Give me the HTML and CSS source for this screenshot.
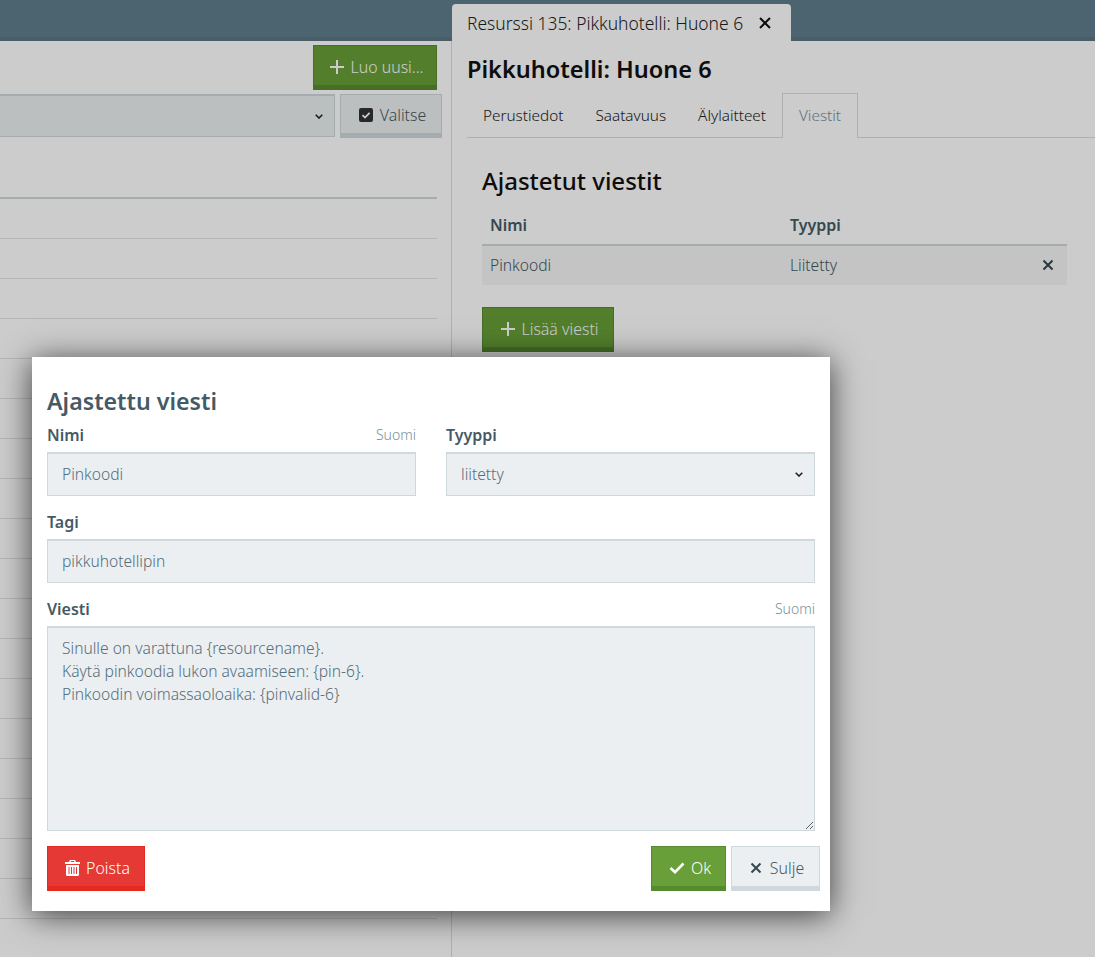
FILE: index.html
```html
<!DOCTYPE html>
<html lang="fi">
<head>
    <meta charset="UTF-8">
    <title>Resurssi 135</title>
    <link rel="stylesheet" href="styles.css">
</head>
<body>
<div class="topBar">
    <div class="pageTab">
        <span>Resurssi 135: Pikkuhotelli: Huone 6</span>
        <svg class="tabClose" viewBox="0 0 14 14"><path d="M2 2 12 12M12 2 2 12"/></svg>
    </div>
</div>
<div class="main">
    <div class="listPanel">
        <div class="listTools">
            <button class="btn btnGreen newBtn" type="button">
                <svg class="plus" viewBox="0 0 14 14"><path d="M7 0V14M0 7H14"/></svg>Luo uusi...
            </button>
        </div>
        <div class="filterRow">
            <select class="filterSelect"><option></option></select>
            <button class="btn btnGrey selectBtn" type="button">
                <svg class="checkBox" viewBox="0 0 14 14"><rect width="14" height="14" rx="2"/><path d="M3.5 7.2 6 9.6 10.6 4.8"/></svg>Valitse
            </button>
        </div>
        <div class="listRows">
            <div class="listHead"></div>
            <div class="listRow"></div>
            <div class="listRow"></div>
            <div class="listRow"></div>
            <div class="listRow"></div>
            <div class="listRow"></div>
            <div class="listRow"></div>
            <div class="listRow"></div>
            <div class="listRow"></div>
            <div class="listRow"></div>
            <div class="listRow"></div>
            <div class="listRow"></div>
            <div class="listRow"></div>
            <div class="listRow"></div>
            <div class="listRow"></div>
            <div class="listRow"></div>
            <div class="listRow"></div>
            <div class="listRow"></div>
            <div class="listRow"></div>
        </div>
    </div>
    <div class="detailPanel">
        <h2 class="detailTitle">Pikkuhotelli: Huone 6</h2>
        <ul class="tabGroup">
            <li class="tab">Perustiedot</li>
            <li class="tab">Saatavuus</li>
            <li class="tab">Älylaitteet</li>
            <li class="tab selectedTab">Viestit</li>
        </ul>
        <div class="tabContent">
            <h3 class="sectionTitle">Ajastetut viestit</h3>
            <div class="msgTable">
                <div class="msgHead">
                    <span class="colName">Nimi</span>
                    <span>Tyyppi</span>
                </div>
                <div class="msgRow">
                    <span class="colName">Pinkoodi</span>
                    <span class="colType">Liitetty</span>
                    <svg class="rowClose" viewBox="0 0 12 12"><path d="M1.5 1.5 10.5 10.5M10.5 1.5 1.5 10.5"/></svg>
                </div>
            </div>
            <button class="btn btnGreen addBtn" type="button">
                <svg class="plus" viewBox="0 0 14 14"><path d="M7 0V14M0 7H14"/></svg>Lisää viesti
            </button>
        </div>
    </div>
</div>
<div class="overlay"></div>
<div class="modal">
    <h2 class="modalTitle">Ajastettu viesti</h2>
    <div class="fieldPair">
        <div class="field">
            <div class="labelRow"><label>Nimi</label><span class="lang">Suomi</span></div>
            <input class="control" type="text" value="Pinkoodi">
        </div>
        <div class="field">
            <div class="labelRow"><label>Tyyppi</label></div>
            <select class="control"><option>liitetty</option></select>
        </div>
    </div>
    <div class="field spaced">
        <div class="labelRow"><label>Tagi</label></div>
        <input class="control" type="text" value="pikkuhotellipin">
    </div>
    <div class="field spaced">
        <div class="labelRow"><label>Viesti</label><span class="lang">Suomi</span></div>
        <textarea class="control message">Sinulle on varattuna {resourcename}.
Käytä pinkoodia lukon avaamiseen: {pin-6}.
Pinkoodin voimassaoloaika: {pinvalid-6}</textarea>
    </div>
    <div class="modalButtons">
        <button class="btn btnRed" type="button">
            <svg class="trash" viewBox="0 0 15 16"><path fill-rule="evenodd" d="M5 0H10L11 2H15V4H0V2H4ZM6 1 5.5 2H9.5L9 1ZM1 5H14V14.5Q14 16 12.5 16H2.5Q1 16 1 14.5ZM3.5 7V14H4.5V7ZM6 7V14H7V7ZM8.5 7V14H9.5V7ZM11 7V14H12V7Z"/></svg>Poista
        </button>
        <div class="rightButtons">
            <button class="btn btnOk" type="button">
                <svg class="check" viewBox="0 0 16 12"><path d="M1.5 6 6 10.2 14.5 1.5"/></svg>Ok
            </button>
            <button class="btn btnClose" type="button">
                <svg class="closeIcon" viewBox="0 0 12 12"><path d="M1.5 1.5 10.5 10.5M10.5 1.5 1.5 10.5"/></svg>Sulje
            </button>
        </div>
    </div>
</div>
</body>
</html>
```

FILE: styles.css
```css
*{
    margin: 0;
    padding: 0;
    box-sizing: border-box;
}
html,body{
    height: 100%;
    overflow: hidden;
}
body{
    font-family: "Noto Sans", "Open Sans", sans-serif;
    font-size: 15.6px;
    font-weight: 350;
    color: #455a64;
    background-color: white;
}
button,input,select,textarea{
    font-family: inherit;
    font-size: inherit;
    font-weight: inherit;
    color: inherit;
}
select{
    appearance: none;
    background-image: url("data:image/svg+xml,%3Csvg xmlns='http://www.w3.org/2000/svg' width='8' height='5'%3E%3Cpath d='M.7.7 4 4 7.3.7' fill='none' stroke='%23222' stroke-width='1.6'/%3E%3C/svg%3E");
    background-repeat: no-repeat;
    background-position: right 11px center;
}

/* top bar */
.topBar{
    height: 41px;
    padding: 4px 0 0 452px;
    background-color: #607d8b;
    border-bottom: 4px solid #5a7583;
}
.pageTab{
    display: flex;
    align-items: center;
    width: 339px;
    height: 37px;
    padding: 0 19px 0 15px;
    justify-content: space-between;
    background-color: white;
    border-radius: 4px 4px 0 0;
    color: #222;
    font-size: 17.45px;
}
.tabClose{
    width: 14px;
    height: 14px;
    fill: none;
    stroke: #111;
    stroke-width: 2;
}

.main{
    display: flex;
    height: 916px;
}

/* left list */
.listPanel{
    width: 452px;
    flex-shrink: 0;
    border-right: 1px solid #ddd;
    overflow: hidden;
}
.listTools{
    display: flex;
    justify-content: flex-end;
    width: 437px;
    padding-top: 4px;
}
.filterRow{
    display: flex;
    gap: 5px;
    margin-top: 4px;
}
.filterSelect{
    width: 335px;
    height: 43px;
    background-color: #eceff1;
    border: 1px solid #cfd8dc;
    border-top-width: 2px;
    border-left: 0;
}
.listRows{
    width: 437px;
}
.listHead{
    height: 2px;
    margin-top: 59px;
    background-color: #cfd8dc;
}
.listRow{
    height: 40px;
    border-bottom: 1px solid #dfe4e7;
}

/* buttons */
.btn{
    display: inline-flex;
    align-items: center;
    justify-content: center;
    height: 45px;
    padding: 2px 0 0 3px;
    font-size: 15.9px;
    cursor: pointer;
    border-style: solid;
    border-width: 1px 1px 5px;
}
.btnGreen{
    background-color: #689f38;
    border-color: #558b2f;
    color: white;
}
.newBtn{
    width: 124px;
}
.addBtn{
    width: 132px;
    margin-top: 22px;
}
.btnGrey{
    width: 102px;
    height: 44px;
    background-color: #eceff1;
    border-color: #cfd8dc;
}
.plus{
    width: 14px;
    height: 14px;
    margin-right: 7px;
    fill: none;
    stroke: white;
    stroke-width: 2;
}
.checkBox{
    width: 14px;
    height: 14px;
    margin-right: 7px;
}
.checkBox rect{
    fill: #333;
}
.checkBox path{
    fill: none;
    stroke: white;
    stroke-width: 1.8;
}

/* right detail */
.detailPanel{
    flex: 1;
    min-width: 0;
}
.detailTitle{
    padding: 12px 0 0 15px;
    font-size: 23.5px;
    line-height: 32px;
    font-weight: 600;
    color: #111;
}
.tabGroup{
    display: flex;
    list-style: none;
    height: 45px;
    margin: 8px 0 0 15px;
    border-bottom: 1px solid #ddd;
}
.tab{
    height: 44px;
    padding: 0 16px;
    line-height: 44px;
    font-size: 15.3px;
    color: #222;
}
.selectedTab{
    background-color: white;
    border: 1px solid #ddd;
    border-bottom: 0;
    color: #78909c;
    line-height: 43px;
    height: 45px;
}
.tabContent{
    padding: 27px 28px 0 30px;
}
.sectionTitle{
    font-size: 24px;
    line-height: 32px;
    font-weight: 500;
    color: #111;
}
.msgTable{
    margin-top: 10px;
}
.msgHead,.msgRow{
    display: flex;
    align-items: center;
    padding-left: 8px;
}
.msgHead{
    height: 39px;
    padding-bottom: 2px;
    border-bottom: 2px solid #cfd8dc;
    font-weight: 600;
    font-size: 16px;
}
.msgRow{
    height: 39px;
    padding-bottom: 2px;
    background-color: #f5f5f5;
}
.colName{
    width: 300px;
}
.colType{
    flex: 1;
}
.rowClose{
    width: 12px;
    height: 12px;
    margin-right: 13px;
    fill: none;
    stroke: #37474f;
    stroke-width: 2;
}

/* modal */
.overlay{
    position: absolute;
    top: 0;
    left: 0;
    right: 0;
    bottom: 0;
    background-color: rgba(0,0,0,.2);
}
.modal{
    position: absolute;
    top: 357px;
    left: 32px;
    width: 798px;
    height: 554px;
    padding: 28px 15px 0;
    background-color: white;
    box-shadow: 0 4px 30px rgba(0,0,0,.7);
}
.modalTitle{
    font-size: 23.2px;
    line-height: 32px;
    font-weight: 600;
}
.fieldPair{
    display: grid;
    grid-template-columns: 369px 369px;
    gap: 30px;
    margin-top: 8px;
}
.labelRow{
    display: flex;
    justify-content: space-between;
    align-items: flex-start;
    height: 27px;
    line-height: 20px;
}
.labelRow label{
    font-weight: 600;
    font-size: 16px;
}
.lang{
    font-size: 14px;
    color: #78909c;
}
.spaced{
    padding-top: 16px;
}
.control{
    display: block;
    width: 100%;
    height: 44px;
    padding: 0 14px 2px;
    background-color: #eceff1;
    border: 1px solid #cfd8dc;
    border-top-width: 2px;
    border-radius: 0;
    color: #546e7a;
    outline: 0;
}
.message{
    height: 205px;
    padding: 9px 14px;
    line-height: 23px;
}
.modalButtons{
    display: flex;
    justify-content: space-between;
    margin-top: 15px;
    width: 773px;
}
.rightButtons{
    display: flex;
    gap: 5px;
}
.btnRed{
    width: 98px;
    background-color: #e53935;
    border-color: #e62a22;
    color: white;
}
.btnOk{
    width: 75px;
    background-color: #689f38;
    border-color: #558b2f;
    color: white;
}
.btnClose{
    width: 89px;
    background-color: #eceff1;
    border-color: #cfd8dc;
}
.trash{
    width: 15px;
    height: 16px;
    margin-right: 6px;
    fill: white;
}
.check{
    width: 16px;
    height: 12px;
    margin-right: 6px;
    fill: none;
    stroke: white;
    stroke-width: 2.6;
}
.closeIcon{
    width: 12px;
    height: 12px;
    margin-right: 8px;
    fill: none;
    stroke: #37474f;
    stroke-width: 2;
}
```
